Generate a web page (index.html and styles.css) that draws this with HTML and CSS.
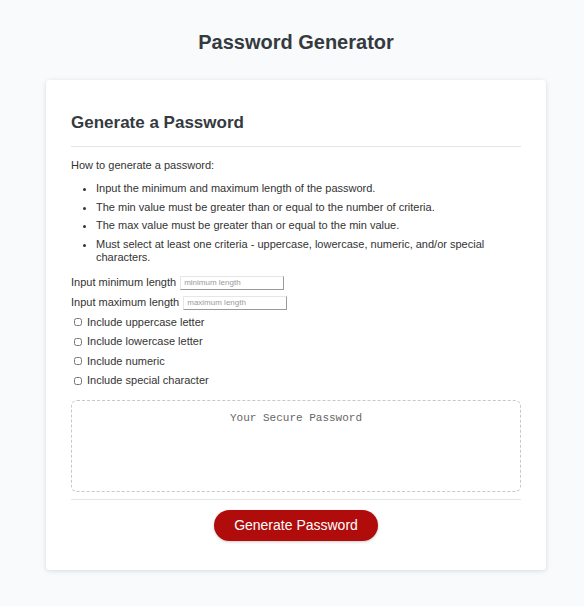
FILE: index.html
```html
<!DOCTYPE html>
<html lang="en">
<head>
    <meta charset="UTF-8">
    <meta name="viewport" content="width=device-width, initial-scale=1.0">
    <title>Password Generator</title>
    <link rel="stylesheet" href="styles.css">
</head>
<body>
    <div class="wrapper">
        <header>
            <h1>Password Generator</h1>
        </header>

        <div class="card">
            <div class="card-header">
                <h2>Generate a Password</h2>
            </div>

            <div class="card-body">
                <p class="intro">How to generate a password:</p>
                <ul class="rules">
                    <li>Input the minimum and maximum length of the password.</li>
                    <li>The min value must be greater than or equal to the number of criteria.</li>
                    <li>The max value must be greater than or equal to the min value.</li>
                    <li>Must select at least one criteria - uppercase, lowercase, numeric, and/or special characters.</li>
                </ul>

                <!-- Length inputs -->
                <div class="field">
                    <label for="minLength">Input minimum length</label>
                    <input type="text" id="minLength" placeholder="minimum length">
                </div>
                <div class="field">
                    <label for="maxLength">Input maximum length</label>
                    <input type="text" id="maxLength" placeholder="maximum length">
                </div>

                <!-- Criteria -->
                <label class="check"><input type="checkbox" id="upper"> Include uppercase letter</label>
                <label class="check"><input type="checkbox" id="lower"> Include lowercase letter</label>
                <label class="check"><input type="checkbox" id="numeric"> Include numeric</label>
                <label class="check"><input type="checkbox" id="special"> Include special character</label>

                <textarea id="password" readonly placeholder="Your Secure Password" aria-label="Generated Password"></textarea>
            </div>

            <div class="card-footer">
                <button id="generate" class="btn">Generate Password</button>
            </div>
        </div>
    </div>
</body>
</html>
```

FILE: styles.css
```css
* {
    box-sizing: border-box;
}

body {
    margin: 0;
    padding-left: 8px;
    font-family: "Liberation Sans", Arial, sans-serif;
    background: #f9fafb;
    color: #333;
}

.wrapper {
    padding: 30px 0 36px;
}

header h1 {
    margin: 0 0 26px;
    text-align: center;
    font-size: 20px;
    line-height: 24px;
    color: #343a40;
}

.card {
    width: 500px;
    margin: 0 auto;
    background: #fff;
    border-radius: 4px;
    box-shadow: 0 1px 5px rgba(0, 0, 0, 0.13);
    padding: 0 25px;
}

.card-header {
    padding-top: 33px;
    padding-bottom: 13px;
    border-bottom: 1px solid #e6e6e6;
}

.card-header h2 {
    margin: 0;
    font-size: 17px;
    line-height: 20px;
    color: #343a40;
}

.card-body {
    padding-top: 12px;
    padding-bottom: 7px;
    border-bottom: 1px solid #e6e6e6;
    font-size: 11px;
    line-height: 13px;
}

.intro {
    margin: 0 0 10px;
}

.rules {
    margin: 0 0 9px;
    padding-left: 25px;
}

.rules li {
    margin-bottom: 5.5px;
}

.field {
    display: flex;
    align-items: center;
    gap: 4px;
    height: 20px;
}

.field input {
    width: 104px;
    height: 14px;
    padding: 0 3px;
    border: 1px solid #e6e6e6;
    border-right-color: #9a9a9a;
    border-bottom-color: #9a9a9a;
    font-family: inherit;
    font-size: 8px;
}

.field input::placeholder {
    color: #999;
}

.check {
    display: flex;
    align-items: center;
    gap: 5px;
    height: 19.5px;
}

.check input {
    width: 8px;
    height: 8px;
    margin: 0 0 0 3px;
}

textarea {
    display: block;
    width: 450px;
    height: 92px;
    margin-top: 9px;
    border: 1px dashed #c8c8c8;
    border-radius: 6px;
    padding: 11px 10px 9px;
    resize: none;
    text-align: center;
    font-family: "Liberation Mono", "DejaVu Sans Mono", monospace;
    font-size: 11px;
}

textarea::placeholder {
    color: #666;
}

.card-footer {
    padding: 10px 0 29px;
    text-align: center;
}

.btn {
    width: 164px;
    height: 31px;
    border: none;
    border-radius: 16px;
    background-color: #b00c0c;
    color: #fff;
    font-family: inherit;
    font-size: 14px;
    cursor: pointer;
    box-shadow: 0 1px 3px rgba(0, 0, 0, 0.2);
}

.btn:hover {
    background-color: #940808;
}
```
